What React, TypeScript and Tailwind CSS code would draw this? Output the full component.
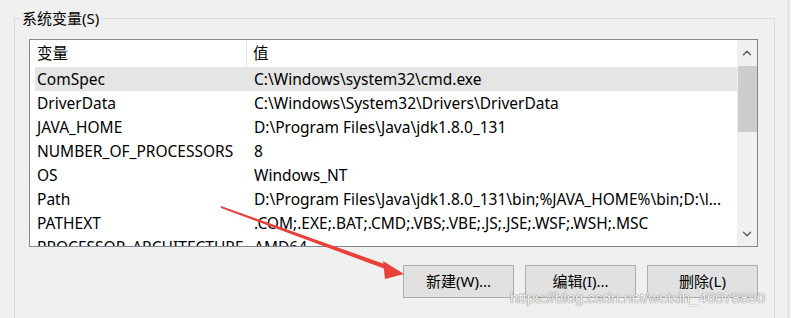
import { ChevronUp, ChevronDown } from 'lucide-react';

const rows: [string, string][] = [
  ['ComSpec', 'C:\\Windows\\system32\\cmd.exe'],
  ['DriverData', 'C:\\Windows\\System32\\Drivers\\DriverData'],
  ['JAVA_HOME', 'D:\\Program Files\\Java\\jdk1.8.0_131'],
  ['NUMBER_OF_PROCESSORS', '8'],
  ['OS', 'Windows_NT'],
  ['Path', 'D:\\Program Files\\Java\\jdk1.8.0_131\\bin;%JAVA_HOME%\\bin;D:\\l...'],
  ['PATHEXT', '.COM;.EXE;.BAT;.CMD;.VBS;.VBE;.JS;.JSE;.WSF;.WSH;.MSC'],
  ['PROCESSOR_ARCHITECTURE', 'AMD64'],
];

function Btn({ label }: { label: string }) {
  return (
    <button className="w-[111px] h-[33px] bg-[#e1e1e1] border border-[#adadad] text-[15px] text-black">
      {label}
    </button>
  );
}

export default function App() {
  return (
    <div
      className="relative w-[791px] h-[318px] overflow-hidden bg-[#f0f0f0] text-black"
      style={{ fontFamily: '"Noto Sans", "Noto Sans CJK SC", sans-serif' }}
    >
      <div className="flex h-full">
        <fieldset className="ml-[14px] mt-[10px] w-[761px] h-[330px] border border-[#dcdcdc] border-b-0 pl-[14px] pr-[16px] pt-[13px]">
          <legend className="ml-[-9px] px-[2px] text-[15px] leading-[16px]">系统变量(S)</legend>
          <div className="flex h-[208px] border border-[#828790] bg-white">
            <div className="flex-1 min-w-0 flex flex-col overflow-hidden">
              <div className="flex h-[27px] shrink-0 items-center text-[15.5px] leading-none">
                <div className="w-[217px] h-full flex items-center pl-[7px] border-r border-[#e5e5e5]">变量</div>
                <div className="pl-[6px]">值</div>
              </div>
              {rows.map(([k, v], i) => (
                <div
                  key={k}
                  className={`ml-[5px] flex h-[24px] shrink-0 items-center text-[15.5px] leading-[24px] whitespace-nowrap ${i === 0 ? 'bg-[#e5e5e5]' : ''}`}
                >
                  <div className="w-[212px] pl-[2px] overflow-hidden">{k}</div>
                  <div className="pl-[7px]">{v}</div>
                </div>
              ))}
            </div>
            <div className="w-[20px] shrink-0 bg-[#f0f0f0] flex flex-col items-center">
              <div className="h-[26px] flex items-center justify-center text-[#606060]">
                <ChevronUp size={14} strokeWidth={2.5} />
              </div>
              <div className="w-[19px] h-[66px] bg-[#cdcdcd]" />
              <div className="flex-1" />
              <div className="h-[24px] flex items-center justify-center text-[#606060]">
                <ChevronDown size={14} strokeWidth={2.5} />
              </div>
            </div>
          </div>
          <div className="mt-[18px] flex justify-end gap-[11px]">
            <Btn label="新建(W)..." />
            <Btn label="编辑(I)..." />
            <Btn label="删除(L)" />
          </div>
        </fieldset>
        <div className="ml-[13px] w-px h-full bg-[#dcdcdc]" />
      </div>

      <svg className="absolute left-0 top-0 pointer-events-none" width="791" height="318">
        <polygon points="221,206 390,266 388,270 221,208" fill="#e8413a" />
        <polygon points="383,261 404,274 385,279" fill="#e8413a" />
      </svg>

      <div
        className="absolute left-[510px] top-[287px] text-[15px] text-[#f4f4f4] pointer-events-none [text-shadow:0_0_1px_#707070,0_0_1px_#909090]"
        style={{ fontFamily: '"Liberation Sans", sans-serif' }}
      >
        https://blog.csdn.net/weixin_46078890
      </div>
    </div>
  );
}
